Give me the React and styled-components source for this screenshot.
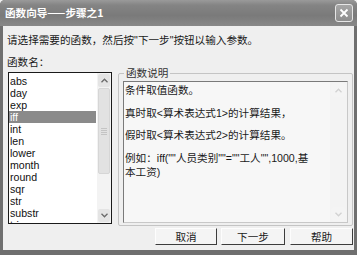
import React from "react";
import styled, { createGlobalStyle } from "styled-components";

const Global = createGlobalStyle`
  html, body { margin: 0; padding: 0; background: #efefef; }
  body { font-family: "Liberation Sans", "Noto Sans CJK SC", sans-serif; }
`;

const Window = styled.div`
  width: 357px;
  height: 255px;
  box-sizing: border-box;
  display: flex;
  flex-direction: column;
  background: #6f6f6f;
  border-radius: 5px 5px 0 0;
  overflow: hidden;
`;

const TitleBar = styled.div`
  height: 26px;
  flex: none;
  display: flex;
  align-items: center;
  justify-content: space-between;
  padding: 0 4px 0 5px;
  box-sizing: border-box;
  background: linear-gradient(#9a9a9a 0%, #848484 20%, #7a7a7a 60%, #888888 100%);
`;

const Title = styled.span`
  font-family: "Noto Sans CJK SC", sans-serif;
  font-size: 10.6px;
  font-weight: 700;
  color: #fff;
  line-height: 12px;
`;

const CloseButton = styled.div`
  width: 18px;
  height: 18px;
  box-sizing: border-box;
  border: 1px solid #e6e6e6;
  border-radius: 3px;
  background: linear-gradient(#a6a6a6, #8e8e8e);
  display: flex;
  align-items: center;
  justify-content: center;
`;

const Body = styled.div`
  flex: 1;
  margin: 0 3px 5px 3px;
  background: #efefef;
  display: flex;
  flex-direction: column;
  padding: 8px 1px 0 5px;
  color: #1a1a1a;
  font-size: 10.5px;
`;

const Prompt = styled.div`
  font-family: "Liberation Sans", "Noto Sans CJK SC", sans-serif;
  font-size: 10.6px;
  line-height: 12px;
  margin-left: -1px;
  margin-top: ${(p) => p.$top || 0}px;
  white-space: nowrap;
`;

const ContentRow = styled.div`
  display: flex;
  gap: 6px;
  margin-top: 4px;
  height: 153px;
`;

const ListBox = styled.div`
  width: 104px;
  height: 152px;
  box-sizing: border-box;
  border: 1px solid #1a1a1a;
  background: #fff;
  display: flex;
  overflow: hidden;
`;

const Items = styled.div`
  flex: 1;
  padding-top: 2px;
  overflow: hidden;
`;

const Item = styled.div`
  height: 12px;
  line-height: 12px;
  font-size: 10.6px;
  padding-left: 1px;
  color: ${(p) => (p.$selected ? "#fff" : "#111")};
  background: ${(p) => (p.$selected ? "#8a8a8a" : "transparent")};
  margin-right: 1px;
`;

const ScrollBar = styled.div`
  width: ${(p) => p.$w}px;
  flex: none;
  display: flex;
  flex-direction: column;
  background: #f3f3f3;
`;

const ArrowBtn = styled.div`
  height: ${(p) => p.$h}px;
  flex: none;
  margin: 1px;
  border-radius: 2px;
  background: ${(p) => (p.$disabled ? "#f4f4f4" : "#e4e4e4")};
  display: flex;
  align-items: center;
  justify-content: center;
`;

const Thumb = styled.div`
  height: 84px;
  margin: 0 1px;
  border-radius: 2px;
  background: #e2e2e2;
  border: 1px solid #d6d6d6;
  display: flex;
  flex-direction: column;
  align-items: center;
  justify-content: center;
  gap: 1px;
`;

const Grip = styled.div`
  width: 6px;
  height: 1px;
  background: #c4c4c4;
`;

const Spacer = styled.div`
  flex: 1;
`;

const GroupBox = styled.div`
  position: relative;
  width: 235px;
  height: 153px;
  margin-top: 1px;
  box-sizing: border-box;
  border: 1px solid #c4c4c4;
  border-radius: 2px;
  padding: 7px 4px 2px 4px;
  display: flex;
`;

const Caption = styled.span`
  position: absolute;
  left: 5px;
  top: -7px;
  padding: 0 2px;
  background: #efefef;
  color: #333;
  font-family: "Noto Sans CJK SC", sans-serif;
  font-size: 10.6px;
  line-height: 12px;
`;

const TextBox = styled.div`
  flex: 1;
  box-sizing: border-box;
  border: 1px solid;
  border-color: #7a7a7a #c8c8c8 #c8c8c8 #7a7a7a;
  background: #f7f7f7;
  display: flex;
`;

const TextArea = styled.div`
  flex: 1;
  padding: 1px 0 0 1px;
  font-family: "Liberation Sans", "Noto Sans CJK SC", sans-serif;
  font-size: 10.6px;
  color: #1a1a1a;
`;

const Para = styled.p`
  margin: 0 0 8.5px 0;
  line-height: 14px;
  white-space: nowrap;
`;

const ButtonRow = styled.div`
  display: flex;
  justify-content: flex-end;
  gap: 4px;
  margin-top: 3px;
`;

const Button = styled.div`
  width: ${(p) => p.$w}px;
  height: 17px;
  box-sizing: border-box;
  border: 1px solid;
  border-color: #fdfdfd #3c3c3c #3c3c3c #fdfdfd;
  background: #f4f4f4;
  display: flex;
  align-items: center;
  justify-content: center;
  font-family: "Noto Sans CJK SC", sans-serif;
  font-size: 10.6px;
  color: #1a1a1a;
  margin-left: ${(p) => p.$ml || 0}px;
`;

const Chevron = ({ up, color }) => (
  <svg width="7" height="5" viewBox="0 0 7 5">
    <path
      d={up ? "M0.5 4.2 L3.5 1.2 L6.5 4.2" : "M0.5 0.8 L3.5 3.8 L6.5 0.8"}
      fill="none"
      stroke={color}
      strokeWidth="1.3"
    />
  </svg>
);

const items = [
  "abs",
  "day",
  "exp",
  "iff",
  "int",
  "len",
  "lower",
  "month",
  "round",
  "sqr",
  "str",
  "substr",
  "trim",
];

export default function App() {
  return (
    <>
      <Global />
      <Window>
        <TitleBar>
          <Title>函数向导——步骤之1</Title>
          <CloseButton>
            <svg width="10" height="10" viewBox="0 0 10 10">
              <path d="M1.5 1.5 L8.5 8.5 M8.5 1.5 L1.5 8.5" stroke="#fff" strokeWidth="1.8" />
            </svg>
          </CloseButton>
        </TitleBar>
        <Body>
          <Prompt>请选择需要的函数，然后按"下一步"按钮以输入参数。</Prompt>
          <Prompt $top={10}>函数名：</Prompt>
          <ContentRow>
            <ListBox>
              <Items>
                {items.map((it) => (
                  <Item key={it} $selected={it === "iff"}>
                    {it}
                  </Item>
                ))}
              </Items>
              <ScrollBar $w={14}>
                <ArrowBtn $h={13}>
                  <Chevron up color="#6a6a6a" />
                </ArrowBtn>
                <Thumb>
                  <Grip />
                  <Grip />
                  <Grip />
                  <Grip />
                </Thumb>
                <Spacer />
                <ArrowBtn $h={13}>
                  <Chevron color="#6a6a6a" />
                </ArrowBtn>
              </ScrollBar>
            </ListBox>
            <GroupBox>
              <Caption>函数说明</Caption>
              <TextBox>
                <TextArea>
                  <Para>条件取值函数。</Para>
                  <Para>真时取&lt;算术表达式1&gt;的计算结果，</Para>
                  <Para>假时取&lt;算术表达式2&gt;的计算结果。</Para>
                  <Para>
                    例如：iff(""人员类别""=""工人"",1000,基
                    <br />
                    本工资)
                  </Para>
                </TextArea>
                <ScrollBar $w={17}>
                  <ArrowBtn $h={14} $disabled>
                    <Chevron up color="#d2d2d2" />
                  </ArrowBtn>
                  <Spacer />
                  <ArrowBtn $h={14} $disabled>
                    <Chevron color="#d2d2d2" />
                  </ArrowBtn>
                </ScrollBar>
              </TextBox>
            </GroupBox>
          </ContentRow>
          <ButtonRow>
            <Button $w={62}>取消</Button>
            <Button $w={64}>下一步</Button>
            <Button $w={63} $ml={1}>帮助</Button>
          </ButtonRow>
        </Body>
      </Window>
    </>
  );
}
